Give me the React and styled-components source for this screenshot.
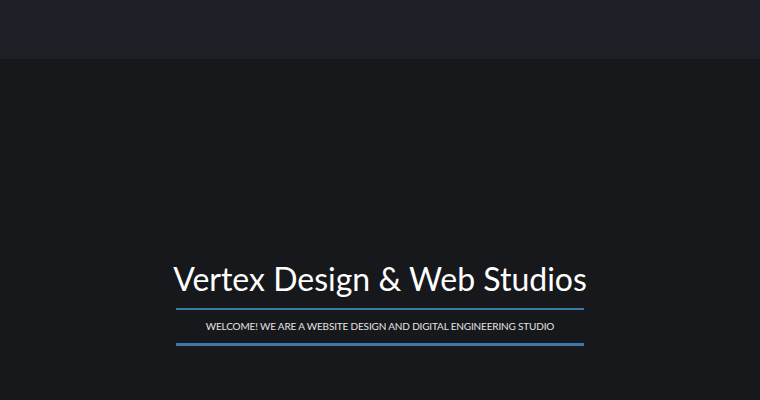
import React from "react";
import styled, { createGlobalStyle } from "styled-components";

const GlobalStyle = createGlobalStyle`
  html, body {
    margin: 0;
    padding: 0;
    background: #17181c;
  }
  body {
    font-family: Lato, "Liberation Sans", sans-serif;
  }
`;

const Page = styled.div`
  width: 760px;
  height: 400px;
  overflow: hidden;
  background: #17181c;
  display: flex;
  flex-direction: column;
`;

const Header = styled.header`
  height: 59px;
  background: #1d1f27;
  flex-shrink: 0;
`;

const Hero = styled.section`
  display: flex;
  flex-direction: column;
  align-items: center;
  padding-top: 200px;
`;

const Title = styled.h1`
  margin: 0 0 9px;
  font-weight: 400;
  font-size: 32px;
  line-height: 40px;
  color: #ffffff;
`;

const Rule = styled.div`
  width: 408px;
  height: ${(p) => p.$thick}px;
  background: #3b7aa6;
`;

const Tagline = styled.p`
  margin: 0;
  padding: 9px 0;
  font-size: 10px;
  line-height: 15px;
  letter-spacing: -0.16px;
  text-transform: uppercase;
  color: #e4e4e4;
`;

export default function App() {
  return (
    <Page>
      <GlobalStyle />
      <Header />
      <Hero>
        <Title>Vertex Design &amp; Web Studios</Title>
        <Rule $thick={2} />
        <Tagline>Welcome! We are a website design and digital engineering studio</Tagline>
        <Rule $thick={3} />
      </Hero>
    </Page>
  );
}
